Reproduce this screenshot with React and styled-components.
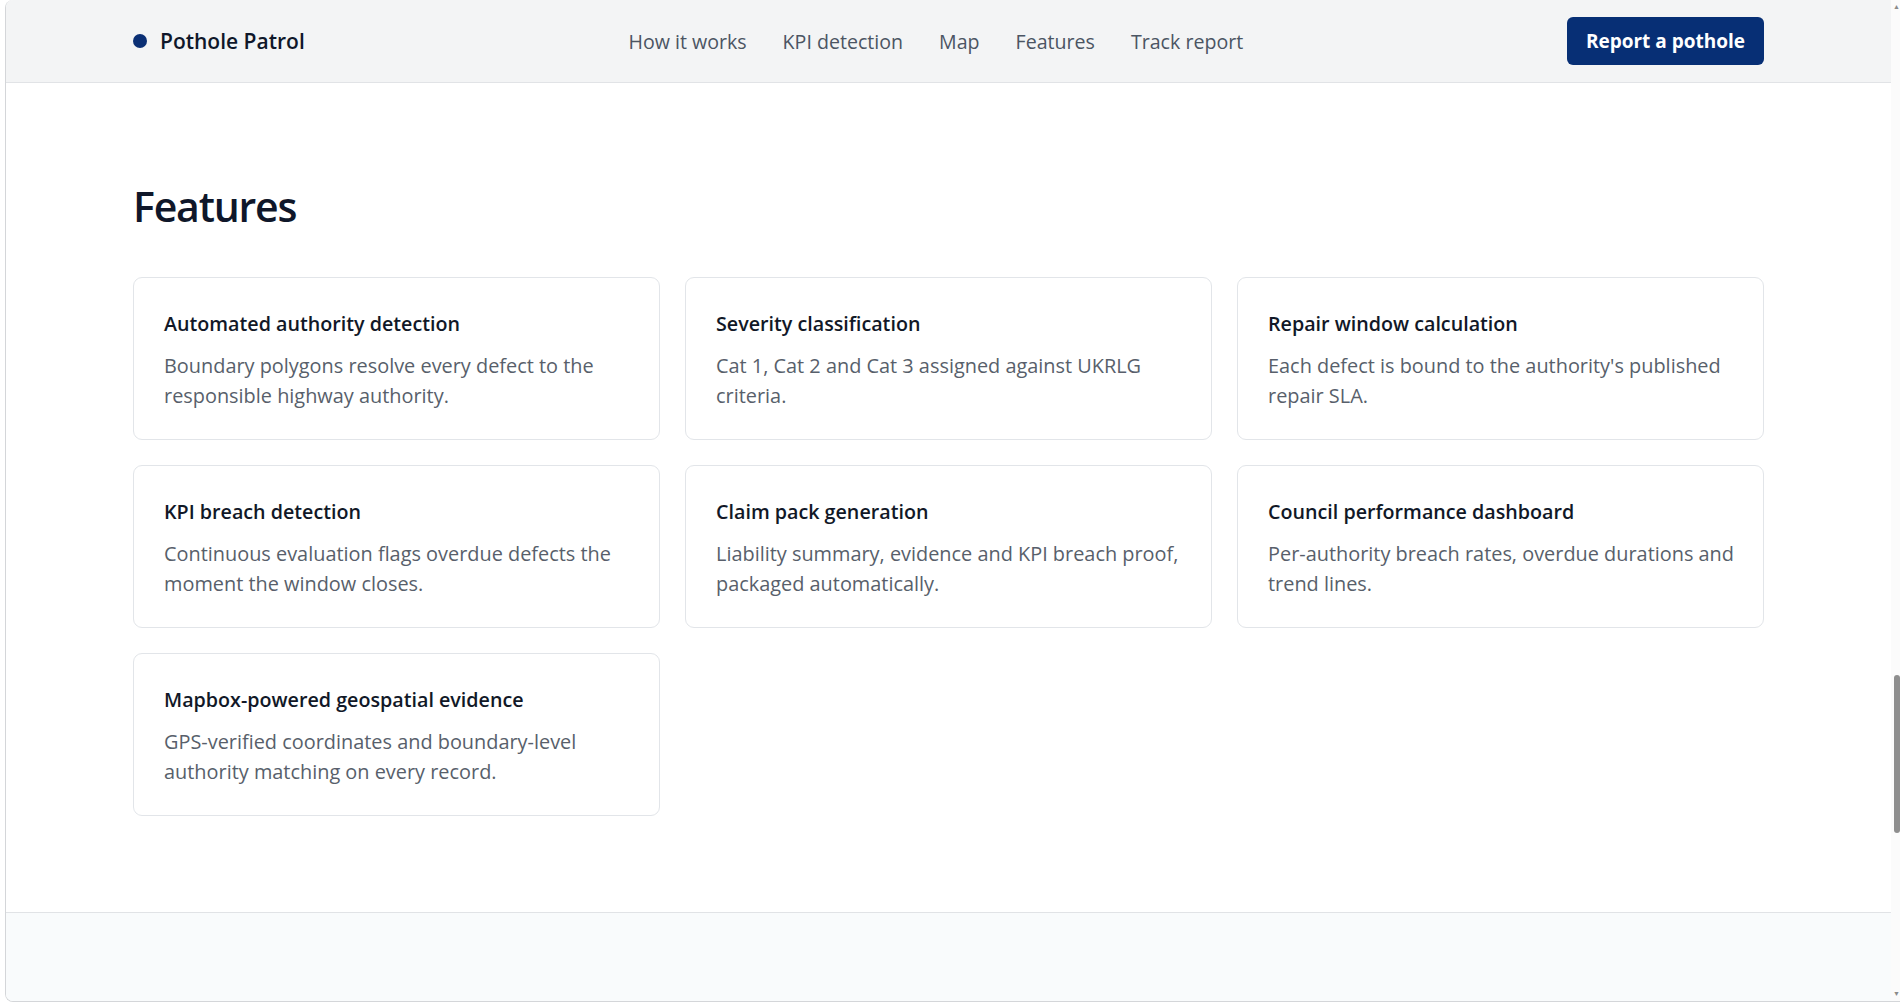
import React from "react";
import styled, { createGlobalStyle } from "styled-components";

const features = [
  {
    title: "Automated authority detection",
    text: "Boundary polygons resolve every defect to the responsible highway authority.",
  },
  {
    title: "Severity classification",
    text: "Cat 1, Cat 2 and Cat 3 assigned against UKRLG criteria.",
  },
  {
    title: "Repair window calculation",
    text: "Each defect is bound to the authority's published repair SLA.",
  },
  {
    title: "KPI breach detection",
    text: "Continuous evaluation flags overdue defects the moment the window closes.",
  },
  {
    title: "Claim pack generation",
    text: "Liability summary, evidence and KPI breach proof, packaged automatically.",
  },
  {
    title: "Council performance dashboard",
    text: "Per-authority breach rates, overdue durations and trend lines.",
  },
  {
    title: "Mapbox-powered geospatial evidence",
    text: "GPS-verified coordinates and boundary-level authority matching on every record.",
  },
];

const navLinks = ["How it works", "KPI detection", "Map", "Features", "Track report"];

const App = () => (
  <>
    <GlobalStyle />
    <Window>
      <Viewport>
        <Header>
          <HeaderInner>
            <Brand href="#">
              <BrandDot />
              Pothole Patrol
            </Brand>
            <Nav>
              {navLinks.map((link) => (
                <NavLink key={link} href="#">
                  {link}
                </NavLink>
              ))}
            </Nav>
            <ReportButton type="button">Report a pothole</ReportButton>
          </HeaderInner>
        </Header>

        <Main>
          <Container>
            <SectionTitle>Features</SectionTitle>
            <FeatureGrid>
              {features.map((f) => (
                <FeatureCard key={f.title}>
                  <CardTitle>{f.title}</CardTitle>
                  <CardText>{f.text}</CardText>
                </FeatureCard>
              ))}
            </FeatureGrid>
          </Container>
        </Main>

        <Footer />
      </Viewport>

      <Scrollbar>
        <ScrollArrow>▲</ScrollArrow>
        <ScrollTrack>
          <ScrollThumb />
        </ScrollTrack>
        <ScrollArrow>▼</ScrollArrow>
      </Scrollbar>
    </Window>
  </>
);

export default App;

const GlobalStyle = createGlobalStyle`
  html, body {
    margin: 0;
    padding: 0;
    background: #ffffff;
    overflow: hidden;
  }
  body {
    font-family: "Open Sans", "Noto Sans", "Liberation Sans", sans-serif;
    -webkit-font-smoothing: antialiased;
  }
  * {
    box-sizing: border-box;
  }
`;

const Window = styled.div`
  display: flex;
  height: 1002px;
  margin-left: 5px;
  border-left: 1px solid #d4d6d9;
  border-bottom: 1px solid #d4d6d9;
  border-radius: 8px 0 0 8px;
  overflow: hidden;
`;

const Viewport = styled.div`
  flex: 1;
  display: flex;
  flex-direction: column;
  min-width: 0;
`;

const Container = styled.div`
  width: 1631px;
  margin: 0 auto;
`;

const Header = styled.header`
  height: 83px;
  background: #f3f4f5;
  border-bottom: 1px solid #e1e3e6;
  flex-shrink: 0;
`;

const HeaderInner = styled(Container)`
  height: 100%;
  display: flex;
  align-items: center;
  justify-content: space-between;
`;

const Brand = styled.a`
  display: flex;
  align-items: center;
  gap: 13px;
  font-size: 21px;
  font-weight: 600;
  color: #0f172a;
  text-decoration: none;
`;

const BrandDot = styled.span`
  width: 14px;
  height: 14px;
  border-radius: 50%;
  background: #0a2f74;
`;

const Nav = styled.nav`
  display: flex;
  gap: 36px;
`;

const NavLink = styled.a`
  font-size: 19.6px;
  color: #4b5563;
  text-decoration: none;
`;

const ReportButton = styled.button`
  height: 48px;
  padding: 0 19px;
  border: none;
  border-radius: 6px;
  background: #072f75;
  color: #ffffff;
  font-family: inherit;
  font-size: 19px;
  font-weight: 700;
  cursor: pointer;
`;

const Main = styled.main`
  padding: 97px 0 96px;
  flex-shrink: 0;
`;

const SectionTitle = styled.h2`
  margin: 0 0 45px;
  font-size: 41px;
  line-height: 52px;
  letter-spacing: -1.2px;
  font-weight: 600;
  color: #0f172a;
`;

const FeatureGrid = styled.div`
  display: grid;
  grid-template-columns: repeat(3, 1fr);
  gap: 25px;
`;

const FeatureCard = styled.div`
  padding: 30px 28px 28px 30px;
  border: 1px solid #e2e5e9;
  border-radius: 9px;
  background: #ffffff;
`;

const CardTitle = styled.h3`
  margin: 0 0 11px;
  font-size: 19.7px;
  line-height: 32px;
  font-weight: 600;
  color: #111827;
`;

const CardText = styled.p`
  margin: 0;
  font-size: 19.9px;
  line-height: 30px;
  color: #585f6b;
`;

const Footer = styled.footer`
  flex: 1;
  background: #f9fbfc;
  border-top: 1px solid #e1e3e6;
`;

const Scrollbar = styled.div`
  width: 9px;
  display: flex;
  flex-direction: column;
  background: #fbfbfb;
`;

const ScrollArrow = styled.div`
  height: 14px;
  font-size: 7px;
  line-height: 14px;
  text-align: right;
  color: #8a8a8a;
`;

const ScrollTrack = styled.div`
  flex: 1;
  display: flex;
  flex-direction: column;
  padding-top: 661px;
  align-items: flex-end;
`;

const ScrollThumb = styled.div`
  width: 6px;
  height: 158px;
  border-radius: 4px;
  background: #8e8e8e;
`;
